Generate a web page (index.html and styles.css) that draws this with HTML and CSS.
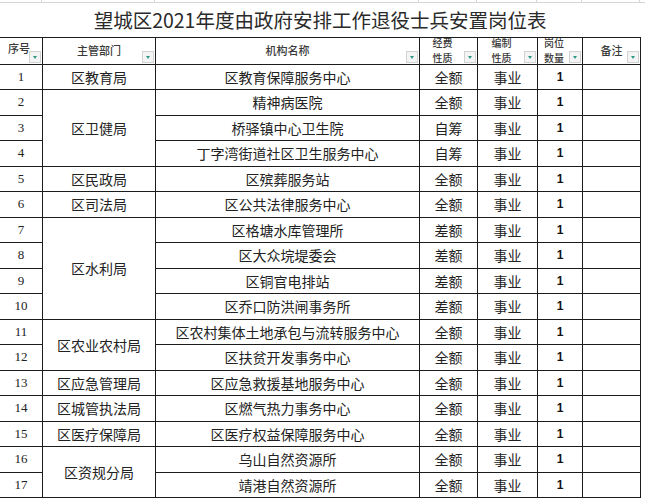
FILE: index.html
```html
<!DOCTYPE html>
<html lang="zh-CN">
<head>
<meta charset="utf-8">
<title>望城区2021年度由政府安排工作退役士兵安置岗位表</title>
<link rel="stylesheet" href="styles.css">
</head>
<body>
<div class="sheet">
  <div class="gridtop">
    <span class="g g1"></span><span class="g g2"></span><span class="g g3"></span><span class="g g4"></span><span class="g g5"></span><span class="g g6"></span><span class="g g7"></span>
  </div>
  <table class="tbl">
    <colgroup>
      <col class="c1"><col class="c2"><col class="c3"><col class="c4"><col class="c5"><col class="c6"><col class="c7"><col class="c8">
    </colgroup>
    <tr class="trow">
      <td class="title" colspan="7">望城区2021年度由政府安排工作退役士兵安置岗位表</td>
      <td class="pad"></td>
    </tr>
    <tr class="hrow">
      <th class="h hl">序号<span class="flt"></span></th>
      <th class="h">主管部门<span class="flt"></span></th>
      <th class="h">机构名称<span class="flt"></span></th>
      <th class="h h2"><div class="stack"><span>经费</span><span>性质</span></div><span class="flt"></span></th>
      <th class="h h2"><div class="stack"><span>编制</span><span>性质</span></div><span class="flt"></span></th>
      <th class="h h2"><div class="stack"><span>岗位</span><span>数量</span></div><span class="flt"></span></th>
      <th class="h">备注<span class="flt"></span></th>
      <td class="pad"></td>
    </tr>
    <tr class="r"><td class="n">1</td><td>区教育局</td><td>区教育保障服务中心</td><td>全额</td><td>事业</td><td class="q">1</td><td></td><td class="pad"></td></tr>
    <tr class="r"><td class="n">2</td><td rowspan="3">区卫健局</td><td>精神病医院</td><td>全额</td><td>事业</td><td class="q">1</td><td></td><td class="pad"></td></tr>
    <tr class="r"><td class="n">3</td><td>桥驿镇中心卫生院</td><td>自筹</td><td>事业</td><td class="q">1</td><td></td><td class="pad"></td></tr>
    <tr class="r"><td class="n">4</td><td>丁字湾街道社区卫生服务中心</td><td>自筹</td><td>事业</td><td class="q">1</td><td></td><td class="pad"></td></tr>
    <tr class="r"><td class="n">5</td><td>区民政局</td><td>区殡葬服务站</td><td>全额</td><td>事业</td><td class="q">1</td><td></td><td class="pad"></td></tr>
    <tr class="r"><td class="n">6</td><td>区司法局</td><td>区公共法律服务中心</td><td>全额</td><td>事业</td><td class="q">1</td><td></td><td class="pad"></td></tr>
    <tr class="r"><td class="n">7</td><td rowspan="4">区水利局</td><td>区格塘水库管理所</td><td>差额</td><td>事业</td><td class="q">1</td><td></td><td class="pad"></td></tr>
    <tr class="r"><td class="n">8</td><td>区大众垸堤委会</td><td>差额</td><td>事业</td><td class="q">1</td><td></td><td class="pad"></td></tr>
    <tr class="r"><td class="n">9</td><td>区铜官电排站</td><td>差额</td><td>事业</td><td class="q">1</td><td></td><td class="pad"></td></tr>
    <tr class="r"><td class="n">10</td><td>区乔口防洪闸事务所</td><td>差额</td><td>事业</td><td class="q">1</td><td></td><td class="pad"></td></tr>
    <tr class="r"><td class="n">11</td><td rowspan="2">区农业农村局</td><td>区农村集体土地承包与流转服务中心</td><td>全额</td><td>事业</td><td class="q">1</td><td></td><td class="pad"></td></tr>
    <tr class="r"><td class="n">12</td><td>区扶贫开发事务中心</td><td>全额</td><td>事业</td><td class="q">1</td><td></td><td class="pad"></td></tr>
    <tr class="r"><td class="n">13</td><td>区应急管理局</td><td>区应急救援基地服务中心</td><td>全额</td><td>事业</td><td class="q">1</td><td></td><td class="pad"></td></tr>
    <tr class="r"><td class="n">14</td><td>区城管执法局</td><td>区燃气热力事务中心</td><td>全额</td><td>事业</td><td class="q">1</td><td></td><td class="pad"></td></tr>
    <tr class="r"><td class="n">15</td><td>区医疗保障局</td><td>区医疗权益保障服务中心</td><td>全额</td><td>事业</td><td class="q">1</td><td></td><td class="pad"></td></tr>
    <tr class="r"><td class="n">16</td><td rowspan="2">区资规分局</td><td>乌山自然资源所</td><td>全额</td><td>事业</td><td class="q">1</td><td></td><td class="pad"></td></tr>
    <tr class="r"><td class="n">17</td><td>靖港自然资源所</td><td>全额</td><td>事业</td><td class="q">1</td><td></td><td class="pad"></td></tr>
  </table>
</div>
</body>
</html>
```

FILE: styles.css
```css
html, body {
  margin: 0;
  padding: 0;
  background: #ffffff;
}
body {
  width: 645px;
  height: 500px;
  overflow: hidden;
  font-family: "Noto Sans CJK SC", "Noto Sans", sans-serif;
  color: #222;
}
.sheet {
  width: 646px;
  margin-left: -1px;
}
.gridtop {
  height: 2px;
  border-bottom: 1px solid #d6d6d6;
  display: flex;
}
.g {
  display: block;
  height: 2px;
  border-right: 1px solid #d6d6d6;
  box-sizing: border-box;
}
.g1 { width: 43px; }
.g2 { width: 113px; }
.g3 { width: 264px; }
.g4 { width: 58px; }
.g5 { width: 60px; }
.g6 { width: 45px; }
.g7 { width: 58px; }

.tbl {
  border-collapse: collapse;
  table-layout: fixed;
  width: 646px;
}
.c1 { width: 43px; }
.c2 { width: 113px; }
.c3 { width: 264px; }
.c4 { width: 58px; }
.c5 { width: 60px; }
.c6 { width: 45px; }
.c7 { width: 58px; }
.c8 { width: 5px; }

.tbl td, .tbl th {
  border: 1px solid #1c1c1c;
  padding: 0;
  text-align: center;
  vertical-align: middle;
  font-size: 14px;
  line-height: 16px;
  white-space: nowrap;
  overflow: hidden;
}
.trow { height: 34px; }
.trow .title {
  border: none;
  border-bottom: 1px solid #1c1c1c;
  font-size: 19.5px;
  font-weight: 400;
  color: #2a2a2a;
  padding-top: 1px;
}
.tbl td.pad {
  border: none;
  border-right: 1px solid #d6d6d6;
}
.hrow { height: 27px; }
.tbl th.h {
  position: relative;
  font-size: 11px;
  line-height: 14px;
  font-weight: 500;
  color: #3a3a3a;
  padding-bottom: 2px;
}
.tbl th.hl {
  text-align: left;
  padding-left: 8px;
  padding-bottom: 5px;
}
.tbl th.h2 {
  font-size: 10px;
  padding-bottom: 0;
  padding-right: 12px;
  overflow: visible;
}
.stack {
  height: 25px;
  display: flex;
  flex-direction: column;
  justify-content: center;
  align-items: center;
  line-height: 14.5px;
}
.stack span {
  display: block;
  flex: none;
}
.flt {
  position: absolute;
  right: 1px;
  bottom: 1px;
  width: 10px;
  height: 10px;
  background: #f4f4f4;
  border: 1px solid #d2d2d2;
}
.flt::after {
  content: "";
  position: absolute;
  left: 3px;
  top: 4px;
  border-left: 2.5px solid transparent;
  border-right: 2.5px solid transparent;
  border-top: 3px solid #2f9a84;
}
.r { height: 25.5px; }
.tbl td.n {
  font-family: "Liberation Serif", "Noto Serif", serif;
  font-size: 13px;
  color: #222;
}
.tbl td.q {
  font-family: "Liberation Sans", Arial, sans-serif;
  font-weight: bold;
  font-size: 12px;
  color: #111;
}
```
